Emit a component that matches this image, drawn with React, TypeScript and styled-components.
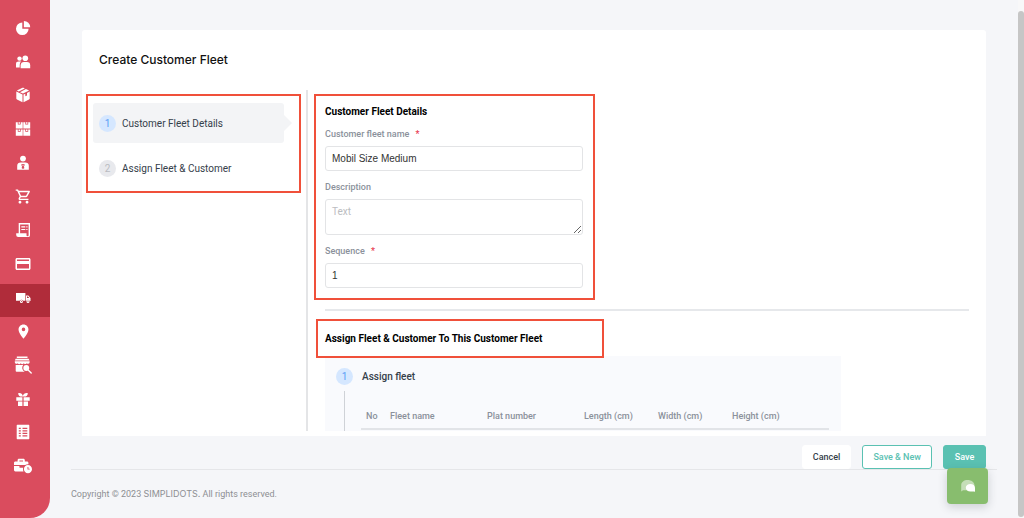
import React from "react";
import styled, { createGlobalStyle } from "styled-components";
import { FaBusinessTime } from "react-icons/fa";
import {
  MdOutlineShoppingCart,
  MdOutlineCreditCard,
  MdLocationOn,
} from "react-icons/md";

const GlobalStyle = createGlobalStyle`
  *, *::before, *::after { box-sizing: border-box; }
  body {
    margin: 0;
    background: #f5f6f9;
    color: #35404a;
    font-family: Roboto, "Liberation Sans", sans-serif;
    font-size: 10px;
    overflow: hidden;
  }
  h1, h2, h3, p, ol { margin: 0; padding: 0; }
`;

const Shell = styled.div`
  display: flex;
  height: 100vh;
`;

const Sidebar = styled.nav`
  flex: none;
  width: 50px;
  display: grid;
  grid-auto-rows: 1fr;
  padding: 14px 0 32px;
  background: #da4c5e;
  border-bottom-right-radius: 20px;
`;

const NavLink = styled.a<{ $active?: boolean }>`
  display: flex;
  align-items: center;
  justify-content: center;
  padding: 0 4px 6px 0;
  color: #fff;
  background: ${(p) => (p.$active ? "#b02c3a" : "transparent")};
  svg { display: block; }
`;

const Main = styled.main`
  flex: 1;
  min-width: 0;
  display: flex;
  flex-direction: column;
  padding: 30px 21px 0 21px;
`;

const Card = styled.section`
  flex: 1;
  min-height: 0;
  display: flex;
  flex-direction: column;
  margin: 0 11px;
  padding-bottom: 5px;
  background: #fff;
  border-radius: 3px 3px 0 0;
`;

const CardTitle = styled.h1`
  padding: 0 17px;
  font-family: Inter, Roboto, sans-serif;
  font-size: 12px;
  line-height: 60px;
  font-weight: 500;
  color: #111;
`;

const CardBody = styled.div`
  flex: 1;
  min-height: 0;
  display: grid;
  grid-template-columns: 226px 1fr;
`;

const StepColumn = styled.div`
  padding: 4px 5px 0 4px;
  border-right: 2px solid #e4e5e7;
`;

const Highlight = styled.div`
  border: 2px solid #f0503a;
`;

const StepHighlight = styled(Highlight)`
  padding: 7px 15px 3px 5px;
`;

const StepList = styled.ol`
  list-style: none;
  display: grid;
  gap: 5px;
`;

const Step = styled.li<{ $active?: boolean }>`
  position: relative;
  display: flex;
  align-items: center;
  gap: 6px;
  height: 40px;
  padding-left: 6px;
  border-radius: 3px;
  font-size: 10px;
  background: ${(p) => (p.$active ? "#f3f4f6" : "transparent")};
  &::after {
    content: "";
    display: ${(p) => (p.$active ? "block" : "none")};
    position: absolute;
    left: 100%;
    top: 12px;
    border: 8px solid transparent;
    border-left-color: #f3f4f6;
    border-right-width: 0;
  }
`;

const StepNumber = styled.span<{ $muted?: boolean }>`
  flex: none;
  display: grid;
  place-items: center;
  width: 17px;
  height: 17px;
  border-radius: 50%;
  font-size: 10px;
  color: ${(p) => (p.$muted ? "#b9bbc1" : "#5b9cf5")};
  background: ${(p) => (p.$muted ? "#e8e9ed" : "#d5e7ff")};
`;

const Content = styled.div`
  min-width: 0;
  overflow: hidden;
  padding: 4px 17px 0 6px;
`;

const FormHighlight = styled(Highlight)`
  width: 281px;
  padding: 10px 10px 10px 9px;
`;

const SectionTitle = styled.h2`
  font-size: 10px;
  line-height: 12px;
  font-weight: 700;
  color: #000;
`;

const Field = styled.div`
  display: flex;
  flex-direction: column;
  gap: 6px;
  margin-top: 11px;
`;

const Label = styled.label`
  font-size: 9px;
  line-height: 11px;
  font-weight: 500;
  color: #8b919b;
`;

const Required = styled.span`
  margin-left: 4px;
  color: #e8384f;
`;

const Input = styled.input`
  width: 100%;
  height: 25px;
  padding: 0 6px 1px;
  border: 1px solid #e3e4e6;
  border-radius: 3px;
  background: #fff;
  font: 10px "Liberation Sans", Arial, sans-serif;
  color: #333;
`;

const TextArea = styled.textarea`
  display: block;
  width: 100%;
  height: 36px;
  padding: 5px 6px;
  border: 1px solid #e3e4e6;
  border-radius: 3px;
  background: #fff;
  font: 10px/13px Roboto, sans-serif;
  resize: vertical;
  &::placeholder { color: #bbbdc1; }
`;

const Divider = styled.hr`
  height: 2px;
  margin: 9px 0 8px 11px;
  border: 0;
  background: #e6e8eb;
`;

const TitleHighlight = styled(Highlight)`
  position: relative;
  width: 288px;
  margin-left: 2px;
  padding: 12px 7px 11px;
`;

const AssignPanel = styled.section`
  display: grid;
  grid-template-columns: 17px 1fr;
  column-gap: 8px;
  width: 516px;
  margin: -2px 0 0 11px;
  padding: 12px 12px 0 11px;
  background: #f9fafd;
`;

const Rail = styled.div`
  display: flex;
  flex-direction: column;
  align-items: center;
  gap: 6px;
  &::after {
    content: "";
    flex: 1;
    width: 1px;
    background: #cfd2d7;
  }
`;

const AssignTitle = styled.h3`
  padding-left: 1px;
  font-size: 10px;
  line-height: 17px;
  font-weight: 500;
`;

const FleetTable = styled.table`
  width: 100%;
  margin-top: 21px;
  table-layout: fixed;
  border-collapse: collapse;
  th {
    padding: 5px 5px 6px;
    border-bottom: 2px solid #e2e4e8;
    font-size: 9px;
    line-height: 11px;
    font-weight: 500;
    text-align: left;
    color: #8b919b;
    white-space: nowrap;
  }
  td { height: 30px; }
`;

const Col = styled.col<{ $width?: number }>`
  width: ${(p) => (p.$width ? `${p.$width}px` : "auto")};
`;

const Actions = styled.div`
  display: flex;
  justify-content: flex-end;
  gap: 11px;
  margin: 9px 11px 0;
`;

const Button = styled.button<{ $kind: "plain" | "outline" | "solid" }>`
  min-width: 43px;
  height: 24px;
  padding: 0 10px;
  border: 1px solid ${(p) => (p.$kind === "plain" ? "#fff" : "#5ac1b2")};
  border-radius: 3px;
  background: ${(p) => (p.$kind === "solid" ? "#5ac1b2" : "#fff")};
  color: ${(p) => ({ plain: "#35404a", outline: "#5ac1b2", solid: "#fff" })[p.$kind]};
  font: 500 9px Roboto, sans-serif;
`;

const Footer = styled.footer`
  height: 49px;
  border-top: 1px solid #e5e6e9;
  font-size: 9px;
  line-height: 48px;
  color: #8d8f93;
`;

const Brand = styled.span`
  font-family: Inter, sans-serif;
`;

const ChatButton = styled.button`
  position: fixed;
  right: 36px;
  bottom: 14px;
  display: grid;
  place-items: center;
  width: 41px;
  height: 36px;
  padding: 0;
  border: 0;
  border-radius: 4px;
  background: #88bd6e;
  box-shadow: 0 3px 10px rgba(40, 50, 60, 0.2);
`;

const ScrollTrack = styled.div`
  flex: none;
  width: 6px;
  padding: 11px 0 1px;
  background: #f8f8f9;
`;

const ScrollThumb = styled.div`
  height: 100%;
  border-radius: 3px;
  background: #c6c6c6;
`;

const Glyph = ({ children, size = 16 }: { children: React.ReactNode; size?: number }) => (
  <svg width={size} height={size} viewBox="0 0 16 16" fill="currentColor" aria-hidden="true">
    {children}
  </svg>
);

const PieIcon = () => (
  <Glyph>
    <path d="M7.300 2.400V8.700H13.600A6.300 6.300 0 1 1 7.300 2.400z" />
    <path d="M8.900 1A6.300 6.300 0 0 1 15.200 7.200H8.900z" />
  </Glyph>
);

const PeopleIcon = () => (
  <Glyph>
    <circle cx="4.500" cy="4.600" r="2.200" />
    <circle cx="10.300" cy="4.200" r="2.800" />
    <path d="M1 13.500v-3.500C1 8.400 2 7.600 3.700 7.600h2.500C4.900 8.600 4.700 9.800 4.700 13.500z" />
    <path d="M5.600 14.200v-2.800C5.600 9.200 7 8 9 8h3c2 0 3.200 1.200 3.200 3.200v3z" />
  </Glyph>
);

const CubeIcon = () => (
  <Glyph>
    <path d="M7.500 .8Q8 .6 8.500 .8L9.800 1.400 3.800 4.400 1.900 3.600zM10.900 1.900 14.100 3.600 8 6.600 5 5.200zM1.300 4.500 7.500 7.500V15.200L2 12.500Q1.300 12.100 1.300 11.500zM14.700 4.500V11.500Q14.700 12.100 14 12.500L8.500 15.200V7.500L10.300 6.700V9.300L12 8.500V5.900z" />
  </Glyph>
);

const ShelvesIcon = () => (
  <Glyph>
    <path d="M.8 1.200h2v2.300h2.900V1.200h2v6.400H.8zM8.300 1.200h2v2.300h2.900V1.200h2v6.400H8.300zM.8 8.400h2v2.300h2.900V8.400h2v6.400H.8zM8.300 8.400h2v2.300h2.900V8.400h2v6.400H8.300z" />
    <path d="M3.500 1.200h1.500v1.500H3.500zM11 1.200h1.500v1.500H11zM3.500 8.400h1.500v1.500H3.500zM11 8.400h1.500v1.500H11z" />
  </Glyph>
);

const StaffIcon = () => (
  <Glyph>
    <circle cx="8" cy="3.600" r="2.900" />
    <path fillRule="evenodd" d="M2.200 14.800v-4c0-2 1.500-3.200 3.500-3.200h4.600c2 0 3.500 1.200 3.500 3.200v4zM6.500 9v1.500l.7 1.300-.7 1.200L8 14l1.500-1-.7-1.200.7-1.300V9zm1 .8h1v.8l-.5.600-.5-.6z" />
  </Glyph>
);

const ReceiptIcon = () => (
  <Glyph>
    <path
      fillRule="evenodd"
      d="M3.700 1h11.300v12.200a1.900 1.900 0 0 1-1.900 1.900H3.200A2 2 0 0 1 1.200 13.100V11.200H3.700zM5.100 2.400V11.200H11.500v2a1 1 0 0 0 2.100 0V2.400z"
    />
    <path d="M6.300 4.200h4v1.200h-4zM11.300 4.200h1.200v1.200h-1.200zM6.300 6.900h4v1.200h-4zM11.300 6.900h1.200v1.200h-1.200z" />
  </Glyph>
);

const TruckIcon = () => (
  <Glyph>
    <path d="M1 3h9.400v7.800H8.200a2 2 0 0 0-3.600 0H1z" />
    <path
      fillRule="evenodd"
      d="M11 5.500h2.300L15.500 8v3h-.9a1.700 1.700 0 0 0-3.200 0H11zM12 6.500V8h2.200L12.900 6.500z"
    />
    <path
      fillRule="evenodd"
      d="M4.900 11.500a1.500 1.500 0 1 0 3 0 1.500 1.500 0 1 0-3 0zm1 0a.5.5 0 1 0 1 0 .5.5 0 1 0-1 0zM11.500 11.500a1.500 1.500 0 1 0 3 0 1.500 1.500 0 1 0-3 0zm1 0a.5.5 0 1 0 1 0 .5.5 0 1 0-1 0z"
    />
  </Glyph>
);

const StoreSearchIcon = () => (
  <Glyph size={18}>
    <path d="M2.500 .5h9.500v1.200H2.500zM1.500 2.500h11.500l.8 1.500H.7zM.7 4.700h13.200v.9a1.500 1.500 0 0 1-2.600.8 1.700 1.700 0 0 1-2.600 0 1.700 1.700 0 0 1-2.700 0 1.700 1.700 0 0 1-2.700 0A1.500 1.500 0 0 1 .7 5.600z" />
    <path d="M1.500 8h6.700a3.900 3.900 0 0 0 1.300 6H2.300a.8.800 0 0 1-.8-.8z" />
    <circle cx="10.900" cy="10.700" r="2.600" />
    <path d="M12.800 12.600 15.300 15.100" stroke="currentColor" strokeWidth="1.200" strokeLinecap="round" />
  </Glyph>
);

const GiftIcon = () => (
  <Glyph>
    <path d="M1.300 6.300H7.400V9.700H1.300zM8.600 6.300h6.100V9.700H8.600zM3 10.500h4.400V15H3zM8.600 10.500H13V15H8.600z" />
    <path d="M7.600 5.500C5 6 3 4.500 3.200 2.200 5.500 1.500 7.500 3 7.800 5 8.400 3 10.500 1.500 12.800 2.200 13 4.500 11 6 8.400 5.500z" />
  </Glyph>
);

const ListIcon = () => (
  <Glyph>
    <path
      fillRule="evenodd"
      d="M2.300 .8h11.400q.6 0 .6.600v13.200q0 .6-.6.600H2.300q-.6 0-.6-.6V1.400q0-.6.6-.6zM3.800 3.800v1.200h2V3.800zM7.500 3.800v1.200h4.800V3.800zM3.800 6.300v1.200h2V6.300zM7.500 6.300v1.200h4.800V6.300zM3.800 8.800V10h2V8.800zM7.500 8.800V10h4.800V8.800zM3.800 11.300v1.200h2v-1.200zM7.500 11.300v1.200h4.800v-1.200z"
    />
  </Glyph>
);

const ChatIcon = () => (
  <svg width="16" height="14" viewBox="0 0 16 14" aria-hidden="true">
    <path d="M1.200 12.400V6.200C1.200 3 4 1 7.600 1s6.900 2.200 6.900 5.300-3 5-6.500 5H3z" fill="#c5deb8" />
    <path d="M15 12.800V8.800c0-2.200-2-3.800-4.600-3.800S5.800 6.600 5.800 8.700s2 3.700 4.600 3.700h3.400z" fill="#fff" />
  </svg>
);

const navItems = [
  { label: "Dashboard", icon: <PieIcon /> },
  { label: "Customers", icon: <PeopleIcon /> },
  { label: "Products", icon: <CubeIcon /> },
  { label: "Warehouse", icon: <ShelvesIcon /> },
  { label: "Staff", icon: <StaffIcon /> },
  { label: "Orders", icon: <MdOutlineShoppingCart size={17} /> },
  { label: "Invoices", icon: <ReceiptIcon /> },
  { label: "Payments", icon: <MdOutlineCreditCard size={18} /> },
  { label: "Fleet", icon: <TruckIcon />, active: true },
  { label: "Locations", icon: <MdLocationOn size={17} /> },
  { label: "Stores", icon: <StoreSearchIcon /> },
  { label: "Promotions", icon: <GiftIcon /> },
  { label: "Reports", icon: <ListIcon /> },
  { label: "Tasks", icon: <FaBusinessTime size={18} /> },
];

export default function App() {
  return (
    <>
      <GlobalStyle />
      <Shell>
        <Sidebar>
          {navItems.map((item) => (
            <NavLink key={item.label} href="#" aria-label={item.label} $active={item.active}>
              {item.icon}
            </NavLink>
          ))}
        </Sidebar>
        <Main>
          <Card>
            <CardTitle>Create Customer Fleet</CardTitle>
            <CardBody>
              <StepColumn>
                <StepHighlight>
                  <StepList>
                    <Step $active>
                      <StepNumber>1</StepNumber>
                      Customer Fleet Details
                    </Step>
                    <Step>
                      <StepNumber $muted>2</StepNumber>
                      Assign Fleet &amp; Customer
                    </Step>
                  </StepList>
                </StepHighlight>
              </StepColumn>
              <Content>
                <FormHighlight>
                  <SectionTitle>Customer Fleet Details</SectionTitle>
                  <Field>
                    <Label htmlFor="fleet-name">
                      Customer fleet name <Required>*</Required>
                    </Label>
                    <Input id="fleet-name" defaultValue="Mobil Size Medium" />
                  </Field>
                  <Field>
                    <Label htmlFor="description">Description</Label>
                    <TextArea id="description" placeholder="Text" />
                  </Field>
                  <Field>
                    <Label htmlFor="sequence">
                      Sequence <Required>*</Required>
                    </Label>
                    <Input id="sequence" defaultValue="1" />
                  </Field>
                </FormHighlight>
                <Divider />
                <TitleHighlight>
                  <SectionTitle>Assign Fleet &amp; Customer To This Customer Fleet</SectionTitle>
                </TitleHighlight>
                <AssignPanel>
                  <Rail>
                    <StepNumber>1</StepNumber>
                  </Rail>
                  <div>
                    <AssignTitle>Assign fleet</AssignTitle>
                    <FleetTable>
                      <colgroup>
                        <Col $width={24} />
                        <Col $width={97} />
                        <Col $width={97} />
                        <Col $width={74} />
                        <Col $width={74} />
                        <Col />
                      </colgroup>
                      <thead>
                        <tr>
                          <th>No</th>
                          <th>Fleet name</th>
                          <th>Plat number</th>
                          <th>Length (cm)</th>
                          <th>Width (cm)</th>
                          <th>Height (cm)</th>
                        </tr>
                      </thead>
                      <tbody>
                        <tr>
                          <td colSpan={6} />
                        </tr>
                      </tbody>
                    </FleetTable>
                  </div>
                </AssignPanel>
              </Content>
            </CardBody>
          </Card>
          <Actions>
            <Button type="button" $kind="plain">Cancel</Button>
            <Button type="button" $kind="outline">Save &amp; New</Button>
            <Button type="button" $kind="solid">Save</Button>
          </Actions>
          <Footer>
            Copyright © 2023 <Brand>SIMPLIDOTS.</Brand> All rights reserved.
          </Footer>
        </Main>
        <ScrollTrack>
          <ScrollThumb />
        </ScrollTrack>
        <ChatButton type="button" aria-label="Open chat">
          <ChatIcon />
        </ChatButton>
      </Shell>
    </>
  );
}
